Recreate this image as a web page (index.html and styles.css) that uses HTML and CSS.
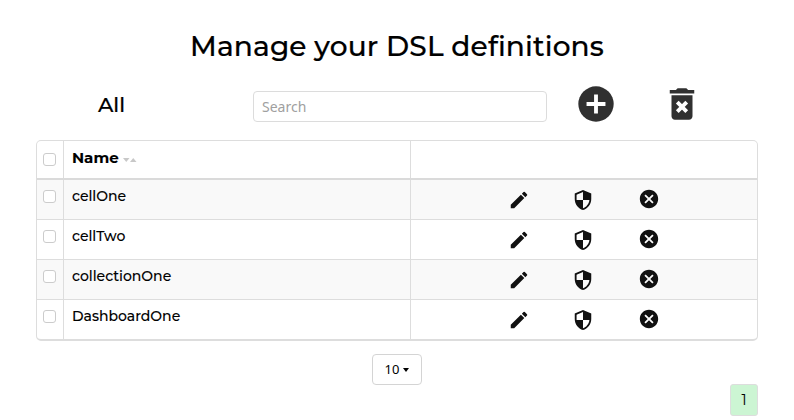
FILE: index.html
```
<!DOCTYPE html>
<html lang="en">
<head>
<meta charset="utf-8">
<title>Manage your DSL definitions</title>
<link rel="stylesheet" href="styles.css">
</head>
<body>
<svg class="sprite" aria-hidden="true">
  <symbol id="edit" viewBox="0 0 24 24"><path d="M3 17.25V21h3.75L17.81 9.94l-3.75-3.75L3 17.25zM20.71 7.04a1 1 0 0 0 0-1.41l-2.34-2.34a1 1 0 0 0-1.41 0l-1.83 1.83 3.75 3.75 1.83-1.83z"/></symbol>
  <symbol id="shield" viewBox="0 0 24 24"><path d="M12 1 3 5v6c0 5.55 3.84 10.74 9 12 5.16-1.26 9-6.45 9-12V5l-9-4zm0 10.99h7c-.53 4.12-3.28 7.79-7 8.94V12H5V6.3l7-3.11v8.8z"/></symbol>
  <symbol id="cancel" viewBox="0 0 24 24"><path d="M12 2C6.47 2 2 6.47 2 12s4.47 10 10 10 10-4.47 10-10S17.53 2 12 2zm5 13.59L15.59 17 12 13.41 8.41 17 7 15.59 10.59 12 7 8.41 8.41 7 12 10.59 15.59 7 17 8.41 13.41 12 17 15.59z"/></symbol>
</svg>
<main>
  <h1>Manage your DSL definitions</h1>
  <div class="toolbar">
    <h2>All</h2>
    <input class="search" type="text" placeholder="Search">
    <svg class="tool add" viewBox="0 0 24 24"><circle cx="12" cy="12" r="10.1"/><path class="mark" d="M12 6.6v10.8M6.6 12h10.8"/></svg>
    <svg class="tool remove" viewBox="0 0 24 24"><path d="M6 19c0 1.1.9 2 2 2h8c1.1 0 2-.9 2-2V7H6v12zM19 4h-3.5l-1-1h-5l-1 1H5v2h14V4z"/><path class="mark" d="m9.3 10.9 5.4 5.4m0-5.4-5.4 5.4"/></svg>
  </div>
  <div class="table">
    <div class="row head"><div class="check"><i></i></div><div class="name">Name<svg class="sort" viewBox="0 0 14 5"><path d="M0 0h6.5L3.25 4zM7 4h6.5L10.25 0z"/></svg></div><div class="actions"></div></div>
    <div class="row odd"><div class="check"><i></i></div><div class="name">cellOne</div><div class="actions"><svg><use href="#edit"/></svg><svg><use href="#shield"/></svg><svg><use href="#cancel"/></svg></div></div>
    <div class="row"><div class="check"><i></i></div><div class="name">cellTwo</div><div class="actions"><svg><use href="#edit"/></svg><svg><use href="#shield"/></svg><svg><use href="#cancel"/></svg></div></div>
    <div class="row odd"><div class="check"><i></i></div><div class="name">collectionOne</div><div class="actions"><svg><use href="#edit"/></svg><svg><use href="#shield"/></svg><svg><use href="#cancel"/></svg></div></div>
    <div class="row"><div class="check"><i></i></div><div class="name">DashboardOne</div><div class="actions"><svg><use href="#edit"/></svg><svg><use href="#shield"/></svg><svg><use href="#cancel"/></svg></div></div>
  </div>
  <div class="size">10<b></b></div>
  <div class="page">1</div>
</main>
</body>
</html>
```
FILE: styles.css
```
* { box-sizing: border-box; }
body { margin: 0; background: #fff; color: #000; font-family: Montserrat, Inter, sans-serif; -webkit-text-stroke: .1px; }
.sprite { display: none; }
main { width: 722px; margin-left: 36px; padding-top: 26px; display: flex; flex-direction: column; }
h1 { margin: 0; height: 40px; font-size: 28px; line-height: 40px; font-weight: 500; letter-spacing: .15px; text-align: center; white-space: nowrap; -webkit-text-stroke: .2px; }
.toolbar { display: flex; align-items: center; height: 42px; margin-top: 17px; }
h2 { margin: 2px 0 0; width: 156px; padding-left: 62px; font-size: 21px; font-weight: 500; line-height: 28px; -webkit-text-stroke: .2px; }
.search { width: 294px; height: 31px; margin: 5px 0 0 61px; padding: 0 8px; border: 1px solid #dcdcdc; border-radius: 4px; font: 14px "Noto Sans", sans-serif; -webkit-text-stroke: 0; }
.search::placeholder { color: #a0a0a0; opacity: 1; }
.tool { width: 42px; height: 42px; fill: #303030; flex: none; }
.mark { fill: none; stroke: #fff; stroke-width: 2.2; }
.add { margin-left: 28px; }
.remove { margin-left: 44px; }
.table { height: 201px; margin-top: 15px; border: 1px solid #ddd; border-bottom: 2px solid #ddd; border-radius: 5px; overflow: hidden; }
.row { display: flex; height: 40px; border-bottom: 1px solid #ddd; }
.row:last-child { height: 40px; border-bottom: 0; }
.row.head { height: 39px; border-bottom: 2px solid #dadada; }
.odd { background: #f9f9f9; }
.check { width: 27px; border-right: 1px solid #ddd; padding: 10px 0 0 6px; }
.head .check { padding-top: 12px; }
.check i { display: block; width: 13px; height: 13px; border: 1px solid #ccc; border-radius: 3px; background: #fff; }
.name { width: 347px; padding: 6px 0 0 8px; border-right: 1px solid #ddd; font-size: 14px; line-height: 20px; font-weight: 500; }
.head .name { padding-top: 7px; font-weight: 700; font-size: 15px; }
.sort { width: 14px; height: 5px; margin-left: 4px; fill: #c8c8c8; }
.actions { display: flex; padding: 9px 0 0 96.5px; }
.actions svg { width: 22px; height: 22px; fill: #111; }
.actions svg + svg { margin-left: 42px; }
.actions svg:last-child { margin: -1px 0 0 44px; }
.size { width: 50px; height: 31px; margin: 13px auto 0; display: flex; align-items: center; justify-content: center; padding-bottom: 1px; border: 1px solid #d4d4d4; border-radius: 4px; font: 13px "Noto Sans", sans-serif; -webkit-text-stroke: 0; }
.size b { margin: 2px 0 0 4px; border: 3.5px solid transparent; border-top: 4px solid #000; border-bottom: 0; }
.page { width: 28px; height: 32px; margin-top: -1px; align-self: flex-end; border: 1px solid #ddd; border-radius: 3px; background: #ccf5d3; font-size: 14px; line-height: 30px; text-align: center; }
```
